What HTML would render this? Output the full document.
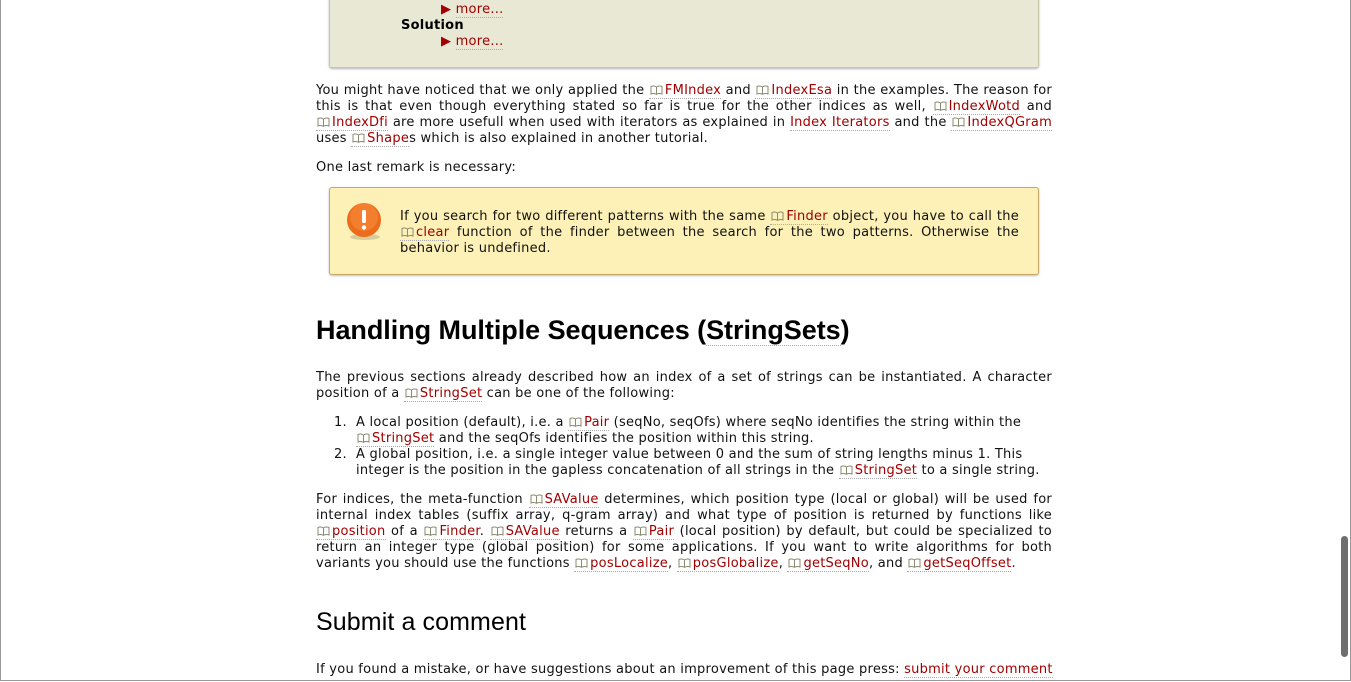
<!DOCTYPE html>
<html><head><meta charset="utf-8"><style>
html,body{margin:0;padding:0;background:#fff;width:1351px;height:682px;overflow:hidden;position:relative}
body{font-family:"DejaVu Sans","Liberation Sans",sans-serif;font-size:13px;letter-spacing:0.25px;color:#111;line-height:16px}
.frame{position:absolute;left:0;top:0;width:1349px;height:680px;border:1px solid #999;border-top:none}
.b{position:absolute;left:316px;width:736px}
.b div{text-align:justify;text-align-last:justify;white-space:normal}
.b div.l{text-align-last:left}
a{color:#a00000;text-decoration:none;border-bottom:1px dotted #aaa}
.ic{display:inline-block;width:13px;height:10px;margin:0 2px 0 1px;vertical-align:-1px}
.ex{position:absolute;left:329px;top:-10px;width:708px;height:77px;background:#e8e8d4;border:1px solid #c9c9a8;border-top:none;border-radius:0 0 3px 3px;box-shadow:0 1px 2px rgba(0,0,0,.3)}
.warn{position:absolute;left:329px;top:187px;width:708px;height:86px;background:#fdf1b8;border:1px solid #c8a868;border-radius:3px;box-shadow:0 1px 2px rgba(0,0,0,.25)}
h2{position:absolute;left:316px;margin:0;font-family:"Liberation Sans",sans-serif;font-weight:bold;font-size:27px;top:314px;line-height:32px;color:#000;letter-spacing:-0.05px}
h3{position:absolute;left:316px;margin:0;font-family:"Liberation Sans",sans-serif;font-weight:normal;font-size:25px;top:607px;line-height:30px;color:#000;letter-spacing:0.1px}
.thumb{position:absolute;left:1341px;top:536px;width:7px;height:121px;background:#6e6e6e;border-radius:4px}
</style></head><body>
<div class="frame"></div>
<svg width="0" height="0" style="position:absolute"><defs><symbol id="bk" viewBox="0 0 13 10"><path d="M6.5 2 C5 0.8 2.5 0.8 1 1.5 V9 C2.5 8.3 5 8.3 6.5 9.3 C8 8.3 10.5 8.3 12 9 V1.5 C10.5 0.8 8 0.8 6.5 2 Z M6.5 2 V9.3" fill="none" stroke="#8a8a70" stroke-width="1"/></symbol></defs></svg>
<div class="ex">
<div style="position:absolute;left:111px;top:12px"><span style="color:#a00000">&#9654;</span> <a>more...</a></div>
<div style="position:absolute;left:71px;top:28px;font-weight:bold;color:#000">Solution</div>
<div style="position:absolute;left:111px;top:44px"><span style="color:#a00000">&#9654;</span> <a>more...</a></div>
</div>
<div class="b" style="top:83px">
<div>You might have noticed that we only applied the <a><svg class="ic"><use href="#bk"/></svg>FMIndex</a> and <a><svg class="ic"><use href="#bk"/></svg>IndexEsa</a> in the examples. The reason for</div>
<div>this is that even though everything stated so far is true for the other indices as well, <a><svg class="ic"><use href="#bk"/></svg>IndexWotd</a> and</div>
<div><a><svg class="ic"><use href="#bk"/></svg>IndexDfi</a> are more usefull when used with iterators as explained in <a>Index Iterators</a> and the <a><svg class="ic"><use href="#bk"/></svg>IndexQGram</a></div>
<div class="l">uses <a><svg class="ic"><use href="#bk"/></svg>Shape</a>s which is also explained in another tutorial.</div>
</div>
<div class="b" style="top:160px">One last remark is necessary:</div>
<div class="warn">
<svg style="position:absolute;left:16px;top:14px" width="38" height="40"><ellipse cx="19" cy="35" rx="15" ry="3" fill="rgba(0,0,0,.15)"/><circle cx="18" cy="18" r="17" fill="#ee6b1b"/><circle cx="18" cy="15" r="14" fill="#f58a3c" opacity=".6"/><rect x="16" y="8" width="4" height="13" rx="1.5" fill="#fff"/><circle cx="18" cy="25.5" r="2.2" fill="#fff"/></svg>
<div class="b" style="left:70px;top:21px;width:619px">
<div>If you search for two different patterns with the same <a><svg class="ic"><use href="#bk"/></svg>Finder</a> object, you have to call the</div>
<div><a><svg class="ic"><use href="#bk"/></svg>clear</a> function of the finder between the search for the two patterns. Otherwise the</div>
<div class="l">behavior is undefined.</div>
</div>
</div>
<h2>Handling Multiple Sequences (<span style="border-bottom:1px dotted #aaa">StringSets</span>)</h2>
<div class="b" style="top:370px">
<div>The previous sections already described how an index of a set of strings can be instantiated. A character</div>
<div class="l">position of a <a><svg class="ic"><use href="#bk"/></svg>StringSet</a> can be one of the following:</div>
</div>
<div style="position:absolute;left:334px;top:415px">1.</div>
<div style="position:absolute;left:334px;top:447px">2.</div>
<div class="b" style="top:415px;left:356px;width:690px">
<div class="l">A local position (default), i.e. a <a><svg class="ic"><use href="#bk"/></svg>Pair</a> (seqNo, seqOfs) where seqNo identifies the string within the</div>
<div class="l"><a><svg class="ic"><use href="#bk"/></svg>StringSet</a> and the seqOfs identifies the position within this string.</div>
<div class="l">A global position, i.e. a single integer value between 0 and the sum of string lengths minus 1. This</div>
<div class="l">integer is the position in the gapless concatenation of all strings in the <a><svg class="ic"><use href="#bk"/></svg>StringSet</a> to a single string.</div>
</div>
<div class="b" style="top:492px">
<div>For indices, the meta-function <a><svg class="ic"><use href="#bk"/></svg>SAValue</a> determines, which position type (local or global) will be used for</div>
<div>internal index tables (suffix array, q-gram array) and what type of position is returned by functions like</div>
<div><a><svg class="ic"><use href="#bk"/></svg>position</a> of a <a><svg class="ic"><use href="#bk"/></svg>Finder</a>. <a><svg class="ic"><use href="#bk"/></svg>SAValue</a> returns a <a><svg class="ic"><use href="#bk"/></svg>Pair</a> (local position) by default, but could be specialized to</div>
<div>return an integer type (global position) for some applications. If you want to write algorithms for both</div>
<div class="l">variants you should use the functions <a><svg class="ic"><use href="#bk"/></svg>posLocalize</a>, <a><svg class="ic"><use href="#bk"/></svg>posGlobalize</a>, <a><svg class="ic"><use href="#bk"/></svg>getSeqNo</a>, and <a><svg class="ic"><use href="#bk"/></svg>getSeqOffset</a>.</div>
</div>
<h3>Submit a comment</h3>
<div class="b" style="top:662px;white-space:nowrap">If you found a mistake, or have suggestions about an improvement of this page press: <a>submit your comment</a></div>
<div class="thumb"></div>
</body></html>
